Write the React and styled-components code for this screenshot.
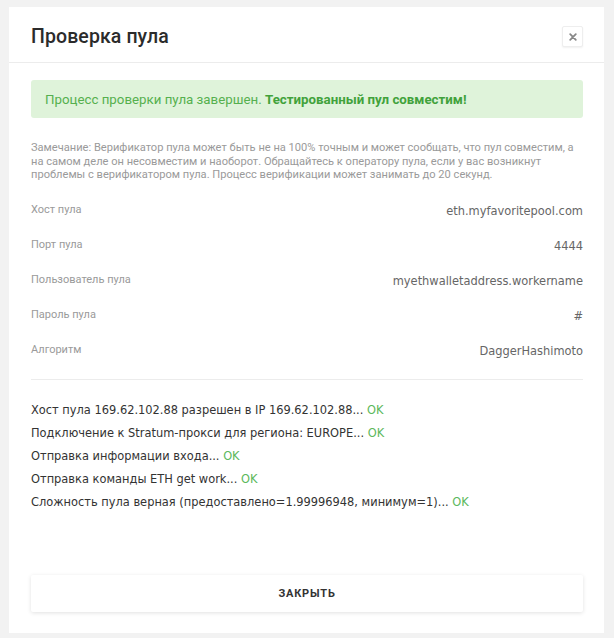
import styled, { createGlobalStyle } from "styled-components";

const GlobalStyle = createGlobalStyle`
  html, body {
    margin: 0;
    padding: 0;
    background: #f2f2f2;
  }
  body {
    font-family: Roboto, "Noto Sans", sans-serif;
  }
`;

const Page = styled.div`
  padding: 7px 10px 5px 9px;
`;

const Modal = styled.div`
  background: #fff;
  height: 626px;
  box-sizing: border-box;
  display: flex;
  flex-direction: column;
`;

const Header = styled.div`
  display: flex;
  align-items: center;
  justify-content: space-between;
  height: 55px;
  padding: 0 21px 0 22px;
  border-bottom: 1px solid #ececec;
`;

const Title = styled.h2`
  margin: 4px 0 0;
  font-size: 19.5px;
  font-weight: 500;
  color: #2b2b2b;
  letter-spacing: 0.1px;
`;

const CloseButton = styled.button`
  width: 21px;
  height: 21px;
  margin-top: 4px;
  padding: 0;
  border: 1px solid #eee;
  border-radius: 2px;
  background: #fff;
  box-shadow: 0 1px 2px rgba(0, 0, 0, 0.06);
  display: flex;
  align-items: center;
  justify-content: center;
  color: #888;
  cursor: pointer;
`;

const Body = styled.div`
  flex: 1;
  display: flex;
  flex-direction: column;
  padding: 17px 21px 21px 22px;
`;

const Alert = styled.div`
  background: #dff3da;
  border-radius: 3px;
  height: 38px;
  display: flex;
  align-items: center;
  padding: 0 14px;
  font-size: 13.3px;
  color: #55b04e;

  b {
    font-weight: 700;
    color: #41a23b;
  }
`;

const Note = styled.p`
  margin: 23px 0 19px;
  font-size: 11.1px;
  line-height: 13.7px;
  color: #9a9a9a;
`;

const Fields = styled.div`
  display: flex;
  flex-direction: column;
  padding-bottom: 3px;
  border-bottom: 1px solid #ececec;
`;

const Field = styled.div`
  display: flex;
  justify-content: space-between;
  align-items: flex-start;
  height: 35px;
`;

const Label = styled.span`
  font-size: 11px;
  color: #9a9a9a;
  padding-top: 2px;
`;

const Value = styled.span`
  font-family: "DejaVu Sans Condensed", "DejaVu Sans", sans-serif;
  font-size: 12.7px;
  color: #666;
  padding-top: 2px;
`;

const Log = styled.div`
  display: flex;
  flex-direction: column;
  margin-top: 18px;
  font-family: "DejaVu Sans Condensed", "DejaVu Sans", sans-serif;
  font-size: 12.7px;
  color: #333;
`;

const LogLine = styled.div`
  line-height: 23px;
`;

const Ok = styled.span`
  color: #5cb85c;
`;

const Footer = styled.div`
  margin-top: auto;
`;

const WideButton = styled.button`
  width: 100%;
  height: 37px;
  border: none;
  border-radius: 2px;
  background: #fff;
  box-shadow: 0 1px 4px rgba(0, 0, 0, 0.12);
  font-family: Roboto, sans-serif;
  font-size: 11px;
  font-weight: 700;
  letter-spacing: 0.8px;
  color: #333;
  cursor: pointer;
`;

const fields = [
  { label: "Хост пула", value: "eth.myfavoritepool.com" },
  { label: "Порт пула", value: "4444" },
  { label: "Пользователь пула", value: "myethwalletaddress.workername" },
  { label: "Пароль пула", value: "#" },
  { label: "Алгоритм", value: "DaggerHashimoto" },
];

const log = [
  "Хост пула 169.62.102.88 разрешен в IP 169.62.102.88...",
  "Подключение к Stratum-прокси для региона: EUROPE...",
  "Отправка информации входа...",
  "Отправка команды ETH get work...",
  "Сложность пула верная (предоставлено=1.99996948, минимум=1)...",
];

export default function App() {
  return (
    <>
      <GlobalStyle />
      <Page>
        <Modal>
          <Header>
            <Title>Проверка пула</Title>
            <CloseButton aria-label="Закрыть">
              <svg width="8" height="8" viewBox="0 0 10 10">
                <path
                  d="M1.5 1.5 L8.5 8.5 M8.5 1.5 L1.5 8.5"
                  stroke="currentColor"
                  strokeWidth="2.2"
                  strokeLinecap="round"
                />
              </svg>
            </CloseButton>
          </Header>
          <Body>
            <Alert>
              Процесс проверки пула завершен.&nbsp;<b>Тестированный пул совместим!</b>
            </Alert>
            <Note>
              Замечание: Верификатор пула может быть не на 100% точным и может
              сообщать, что пул совместим, а на самом деле он несовместим и
              наоборот. Обращайтесь к оператору пула, если у вас возникнут
              проблемы с верификатором пула. Процесс верификации может занимать
              до 20 секунд.
            </Note>
            <Fields>
              {fields.map((f) => (
                <Field key={f.label}>
                  <Label>{f.label}</Label>
                  <Value>{f.value}</Value>
                </Field>
              ))}
            </Fields>
            <Log>
              {log.map((line) => (
                <LogLine key={line}>
                  {line} <Ok>OK</Ok>
                </LogLine>
              ))}
            </Log>
            <Footer>
              <WideButton>ЗАКРЫТЬ</WideButton>
            </Footer>
          </Body>
        </Modal>
      </Page>
    </>
  );
}
